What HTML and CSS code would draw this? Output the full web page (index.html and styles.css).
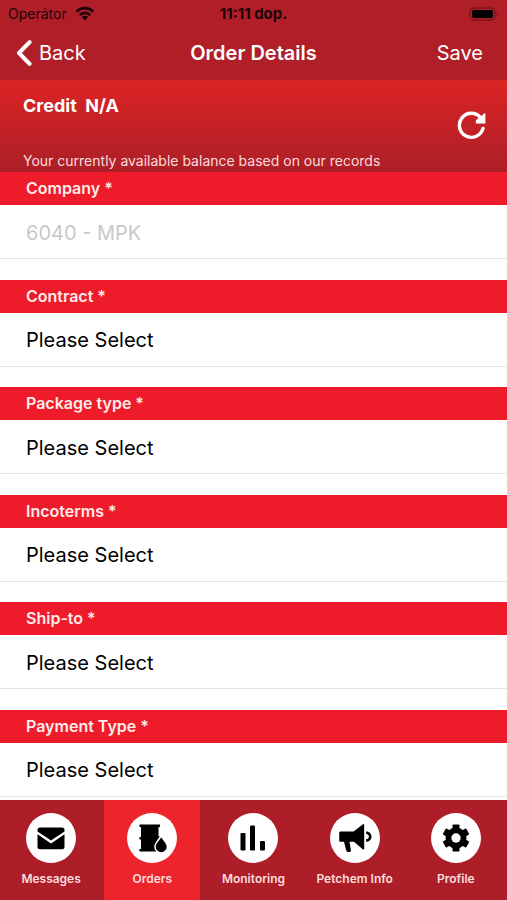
FILE: index.html
```html
<!DOCTYPE html>
<html lang="en">
<head>
  <meta charset="UTF-8" />
  <meta name="viewport" content="width=device-width, initial-scale=1.0"/>
  <title>Order Details</title>
  <link rel="stylesheet" href="styles.css">
</head>
<body>

  <div class="status-bar">
    <div class="carrier">
      <span>Operátor</span>
      <svg class="wifi" viewBox="0 0 20 15" aria-hidden="true">
        <path d="M1.6 5.6a12 12 0 0 1 16.8 0M4.8 9a7.4 7.4 0 0 1 10.4 0" fill="none" stroke="currentColor" stroke-width="2.6"/>
        <path d="M6.8 11a4.6 4.6 0 0 1 6.4 0L10 14.4z" fill="currentColor"/>
      </svg>
    </div>
    <div class="clock">11:11 dop.</div>
    <svg class="battery" viewBox="0 0 30 14" aria-hidden="true">
      <rect x="1" y="1" width="25" height="12" rx="4" fill="none" stroke="#7d141b" stroke-width="1.4"/>
      <rect x="3" y="3" width="21" height="8" rx="2" fill="#000"/>
      <path d="M27.6 5.4v3.2q1.4-.4 1.4-1.6t-1.4-1.6z" fill="#7d141b"/>
    </svg>
  </div>

  <header class="nav-bar">
    <a class="back" href="#">
      <svg viewBox="0 0 16 26" aria-hidden="true"><path d="M13.6 2.2L3 13l10.6 10.8" fill="none" stroke="currentColor" stroke-width="4" stroke-linecap="round" stroke-linejoin="round"/></svg>
      <span>Back</span>
    </a>
    <h1>Order Details</h1>
    <button class="save" type="submit" form="orderForm">Save</button>
  </header>

  <section class="credit">
    <div class="credit-info">
      <h2>Credit&nbsp; N/A</h2>
      <p>Your currently available balance based on our records</p>
    </div>
    <button class="refresh" type="button" aria-label="Refresh balance">
      <svg viewBox="0 0 30 30" aria-hidden="true">
        <path d="M23.6 6.6A12 12 0 1 0 26 17.4" fill="none" stroke="currentColor" stroke-width="3.4" stroke-linecap="round"/>
        <path d="M28.4 2.6v9.8H18.8v-2.8L22.6 6l2.6-1.6 1.600-1.800z" fill="currentColor"/>
      </svg>
    </button>
  </section>

  <form class="order-form" id="orderForm">
    <div class="field">
      <label for="company">Company *</label>
      <select id="company" disabled><option>6040 - MPK</option></select>
    </div>
    <div class="field">
      <label for="contract">Contract *</label>
      <select id="contract"><option>Please Select</option></select>
    </div>
    <div class="field">
      <label for="packageType">Package type *</label>
      <select id="packageType"><option>Please Select</option></select>
    </div>
    <div class="field">
      <label for="incoterms">Incoterms *</label>
      <select id="incoterms"><option>Please Select</option></select>
    </div>
    <div class="field">
      <label for="shipTo">Ship-to *</label>
      <select id="shipTo"><option>Please Select</option></select>
    </div>
    <div class="field">
      <label for="paymentType">Payment Type *</label>
      <select id="paymentType"><option>Please Select</option></select>
    </div>
  </form>

  <nav class="tab-bar">
    <a class="tab" href="#">
      <span class="tab-icon">
        <svg viewBox="0 0 50 50" aria-hidden="true">
          <path d="M14 14.5h22a2.5 2.5 0 0 1 2.5 2.5v1.6L25 27.6 11.5 18.6V17a2.5 2.5 0 0 1 2.5-2.5z"/>
          <path d="M11.5 21.2L25 30.4l13.5-9.2v12.6a2.5 2.5 0 0 1-2.5 2.5H14a2.5 2.5 0 0 1-2.5-2.5z"/>
        </svg>
      </span>
      <span>Messages</span>
    </a>
    <a class="tab active" href="#" aria-current="page">
      <span class="tab-icon">
        <svg viewBox="0 0 50 50" aria-hidden="true">
          <path d="M12.5 11.5h20.500v2.500h-1.500v9.500h1.500c-2.400 3-4.500 6.500-4.500 9.500 0 2 .6 3.700 1.800 5.500H12.500V36H14v-9.500h-1.500V24H14V14h-1.500z"/>
          <path d="M34.200 24.500c2.700 3.800 5.500 6.500 5.500 9.200a5.500 5.500 0 0 1-11 0c0-2.700 2.800-5.400 5.500-9.200z" stroke="#fff" stroke-width="3" paint-order="stroke"/>
        </svg>
      </span>
      <span>Orders</span>
    </a>
    <a class="tab" href="#">
      <span class="tab-icon">
        <svg viewBox="0 0 50 50" aria-hidden="true">
          <rect x="12.5" y="20" width="5" height="17.5" rx="1"/>
          <rect x="22" y="12.5" width="5" height="25" rx="1"/>
          <rect x="32" y="28" width="5" height="9.5" rx="1"/>
        </svg>
      </span>
      <span>Monitoring</span>
    </a>
    <a class="tab" href="#">
      <span class="tab-icon">
        <svg viewBox="0 0 50 50" aria-hidden="true">
          <path d="M10.5 18.500h13L33 11.300q1.200-.6 1.200.8v23.500q0 1.400-1.200.8L24 28.800h-4.500l1.400 8.500a1.500 1.500 0 0 1-1.300 1.700h-1.700a1.800 1.800 0 0 1-1.700-1.400L14 28.800h-3.500a1.300 1.300 0 0 1-1.300-1.300v-7.700a1.300 1.300 0 0 1 1.300-1.300z"/>
          <path d="M36.200 19.400q4 .8 4 4.200t-4 4.200" fill="none" stroke="#000" stroke-width="2.600"/>
        </svg>
      </span>
      <span>Petchem Info</span>
    </a>
    <a class="tab" href="#">
      <span class="tab-icon">
        <svg viewBox="-25 -25 50 50" aria-hidden="true">
          <rect x="-3.500" y="-13.500" width="7" height="27" rx="1"/>
          <rect x="-3.500" y="-13.500" width="7" height="27" rx="1" transform="rotate(60)"/>
          <rect x="-3.500" y="-13.500" width="7" height="27" rx="1" transform="rotate(120)"/>
          <circle r="10.500"/>
          <circle r="4.700" fill="#fff"/>
        </svg>
      </span>
      <span>Profile</span>
    </a>
  </nav>

</body>
</html>
```
FILE: styles.css
```css
/* ===== Base ===== */
* { margin:0; padding:0; box-sizing:border-box; }
html, body { height:100%; }

body {
  display:flex; flex-direction:column;
  font-family:Inter, "Liberation Sans", sans-serif;
  background:#fff; color:#000;
}
a { color:inherit; text-decoration:none; }
button, select {
  font:inherit; color:inherit; background:none;
  border:none; cursor:pointer;
}

/* ===== Status bar ===== */
.status-bar {
  display:grid; grid-template-columns:1fr auto 1fr; align-items:center;
  flex:none; height:27px; padding:0 8px;
  background:#b01e28; color:#1c0508; font-size:14px;
}
.carrier { display:flex; align-items:center; gap:8px; }
.wifi { width:20px; height:15px; }
.clock { font-size:15px; font-weight:700; }
.battery { width:30px; height:14px; justify-self:end; }

/* ===== Navigation bar ===== */
.nav-bar {
  display:grid; grid-template-columns:1fr auto 1fr; align-items:center;
  flex:none; height:53px; padding:0 16px 2px;
  background:#b01e28; color:#fff; font-size:20px;
}
.back { display:flex; align-items:center; gap:7px; }
.back svg { width:16px; height:26px; }
.nav-bar h1 { font-size:20px; font-weight:600; }
.save { justify-self:end; padding:0 8px; }

/* ===== Credit ===== */
.credit {
  display:flex; justify-content:space-between; align-items:center;
  flex:none; height:92px; padding:0 20px 0 23px;
  background:linear-gradient(#dc2424, #ac1f28);
  color:#fff;
}
.credit-info {
  display:flex; flex-direction:column; justify-content:space-between;
  height:100%; padding:14px 0 2px;
}
.credit h2 { font-size:18px; line-height:24px; font-weight:700; }
.credit p { font-size:14px; line-height:18px; color:#fbdcdc; }
.refresh svg { display:block; width:30px; height:30px; }

/* ===== Order form ===== */
.order-form {
  display:flex; flex-direction:column; justify-content:space-between;
  flex:1 0 auto; padding-bottom:3px;
}
.field label {
  display:block; height:33px; padding-left:26px;
  background:#ee1c2a; color:#ffeaea;
  font-size:16px; line-height:33px; font-weight:600;
}
.field select {
  display:block; width:100%; height:54px; padding:2px 26px 0;
  appearance:none; border-bottom:1px solid #e4e4e4;
  font-size:20px;
}
.field select:disabled { color:#c8c8c8; opacity:1; }

/* ===== Tab bar ===== */
.tab-bar {
  display:grid; grid-template-columns:repeat(5, 1fr); gap:5px;
  flex:none; height:100px; padding:0 3px;
  background:#ae1e28;
}
.tab {
  display:flex; flex-direction:column; align-items:center; gap:8px;
  padding-top:13px;
  color:#fbdcdc; font-size:12px; line-height:16px; font-weight:600;
  white-space:nowrap;
}
.tab.active { background:#ee242c; }
.tab-icon {
  width:50px; height:50px;
  background:#fff; border-radius:50%;
}
.tab-icon svg { display:block; width:50px; height:50px; }
```
